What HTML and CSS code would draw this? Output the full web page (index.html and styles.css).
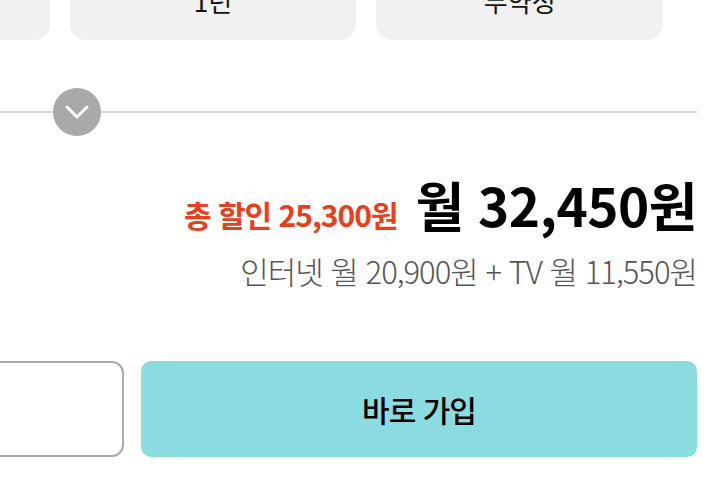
FILE: index.html
```html
<!DOCTYPE html>
<html lang="ko">
<head>
  <meta charset="UTF-8">
  <meta name="viewport" content="width=device-width, initial-scale=1.0">
  <title>요금 안내</title>
  <link rel="stylesheet" href="styles.css">
</head>
<body>
  <div class="plans">
    <div class="plan-card">2년</div>
    <div class="plan-card">1년</div>
    <div class="plan-card">무약정</div>
  </div>

  <div class="content">
    <div class="divider">
      <button class="toggle" aria-label="펼치기">
        <svg width="24" height="16" viewBox="0 0 24 16">
          <path d="M2 3 L12 13 L22 3" fill="none" stroke="#fff" stroke-width="3" stroke-linecap="round" stroke-linejoin="round"/>
        </svg>
      </button>
    </div>

    <div class="price-row">
      <span class="discount">총 할인 25,300원</span>
      <span class="total">월 32,450원</span>
    </div>
    <div class="price-detail">인터넷 월 20,900원 + TV 월 11,550원</div>

    <div class="actions">
      <button class="btn-outline">상담 신청</button>
      <button class="btn-join">바로 가입</button>
    </div>
  </div>
</body>
</html>
```

FILE: styles.css
```css
body {
  margin: 0;
  font-family: "Noto Sans CJK KR", "Noto Sans", sans-serif;
  background-color: #fff;
  color: #000;
  overflow: hidden;
  height: 100vh;
}
.plans {
  display: flex;
  gap: 20px;
  width: 900px;
  margin-left: -237px;
  margin-top: -40px;
}
.plan-card {
  flex: 1;
  height: 80px;
  display: flex;
  align-items: center;
  justify-content: center;
  background-color: #f1f1f1;
  border-radius: 16px;
  font-size: 26px;
  color: #111;
}
.content {
  margin-left: -76px;
  margin-right: 21px;
}
.divider {
  position: relative;
  height: 2px;
  margin-top: 71px;
  background-color: #d9d9d9;
}
.toggle {
  position: absolute;
  left: 129px;
  top: -23px;
  width: 48px;
  height: 48px;
  padding: 0;
  border: none;
  border-radius: 50%;
  background-color: #a9a9a9;
  display: flex;
  align-items: center;
  justify-content: center;
  cursor: pointer;
}
.price-row {
  display: flex;
  justify-content: flex-end;
  align-items: baseline;
  gap: 18px;
  margin-top: 60px;
  line-height: 1.2;
}
.discount {
  font-size: 30px;
  font-weight: 700;
  color: #e8401c;
  letter-spacing: -1px;
}
.total {
  font-size: 53px;
  font-weight: 700;
  letter-spacing: -0.5px;
}
.price-detail {
  margin-top: 14px;
  text-align: right;
  font-size: 31px;
  font-weight: 300;
  color: #555;
  letter-spacing: -1px;
  line-height: 1.3;
}
.actions {
  display: flex;
  gap: 17px;
  margin-top: 70px;
}
.btn-outline {
  flex: 0 0 200px;
  height: 96px;
  border: 2px solid #aaa;
  border-radius: 12px;
  background-color: #fff;
  color: transparent;
  font-family: inherit;
  font-size: 26px;
}
.btn-join {
  flex: 1;
  height: 96px;
  border: none;
  border-radius: 10px;
  background-color: #8adce0;
  font-family: inherit;
  font-size: 30px;
  font-weight: 500;
  letter-spacing: -1px;
  color: #000;
  cursor: pointer;
}
```
